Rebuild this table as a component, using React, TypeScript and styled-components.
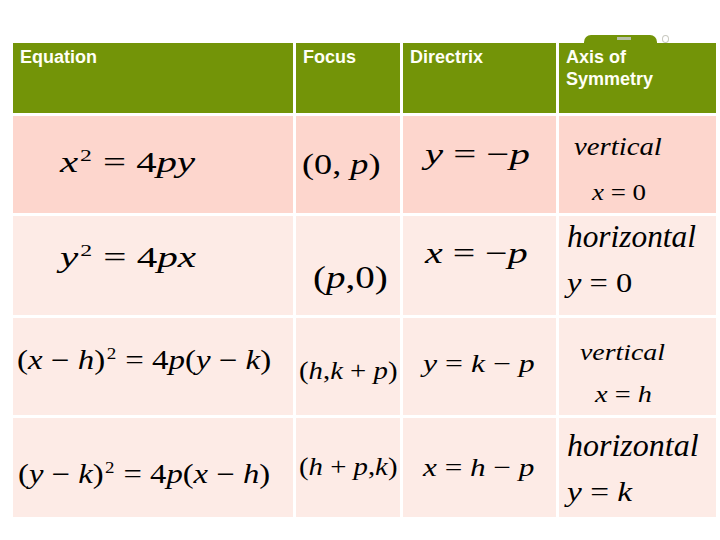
import React from 'react'
import styled, { createGlobalStyle } from 'styled-components'

const GlobalStyle = createGlobalStyle`
  html, body {
    margin: 0;
    padding: 0;
    background: #ffffff;
  }
  body {
    font-family: 'Liberation Sans', Arial, sans-serif;
  }
`

type LineSpec = {
  content: React.ReactNode
  size: number
  sx?: number
  mt: number
  pl: number
}

type Tone = 'deep' | 'light'

type RowSpec = {
  tone: Tone
  cells: LineSpec[][]
}

const V = styled.i`
  font-style: italic;
`

const Sup = styled.span`
  position: relative;
  top: -0.66em;
  font-size: 0.58em;
  line-height: 0;
  margin-left: 0.08em;
  margin-right: 0.04em;
`

const rows: RowSpec[] = [
  {
    tone: 'deep',
    cells: [
      [
        {
          content: (
            <>
              <V>x</V>
              <Sup>2</Sup> = 4<V>py</V>
            </>
          ),
          size: 30,
          sx: 1.36,
          mt: 31,
          pl: 47,
        },
      ],
      [
        {
          content: (
            <>
              (0, <V>p</V>)
            </>
          ),
          size: 29,
          sx: 1.25,
          mt: 34,
          pl: 6,
        },
      ],
      [
        {
          content: (
            <>
              <V>y</V> = −<V>p</V>
            </>
          ),
          size: 30,
          sx: 1.36,
          mt: 23,
          pl: 22,
        },
      ],
      [
        { content: <V>vertical</V>, size: 25, sx: 1.15, mt: 18, pl: 15 },
        {
          content: (
            <>
              <V>x</V> = 0
            </>
          ),
          size: 24,
          sx: 1.12,
          mt: 21,
          pl: 33,
        },
      ],
    ],
  },
  {
    tone: 'light',
    cells: [
      [
        {
          content: (
            <>
              <V>y</V>
              <Sup>2</Sup> = 4<V>px</V>
            </>
          ),
          size: 30,
          sx: 1.37,
          mt: 26,
          pl: 47,
        },
      ],
      [
        {
          content: (
            <>
              (<V>p</V>,0)
            </>
          ),
          size: 32,
          sx: 1.22,
          mt: 45,
          pl: 17,
        },
      ],
      [
        {
          content: (
            <>
              <V>x</V> = −<V>p</V>
            </>
          ),
          size: 30,
          sx: 1.33,
          mt: 22,
          pl: 22,
        },
      ],
      [
        { content: <V>horizontal</V>, size: 32, sx: 0.98, mt: 4, pl: 8 },
        {
          content: (
            <>
              <V>y</V> = 0
            </>
          ),
          size: 28,
          sx: 1.16,
          mt: 17,
          pl: 8,
        },
      ],
    ],
  },
  {
    tone: 'light',
    cells: [
      [
        {
          content: (
            <>
              (<V>x</V> − <V>h</V>)<Sup>2</Sup> = 4<V>p</V>(<V>y</V> − <V>k</V>)
            </>
          ),
          size: 27,
          sx: 1.22,
          mt: 29,
          pl: 4,
        },
      ],
      [
        {
          content: (
            <>
              (<V>h</V>,<V>k</V> + <V>p</V>)
            </>
          ),
          size: 25,
          sx: 1.15,
          mt: 40,
          pl: 3,
        },
      ],
      [
        {
          content: (
            <>
              <V>y</V> = <V>k</V> − <V>p</V>
            </>
          ),
          size: 25,
          sx: 1.27,
          mt: 33,
          pl: 20,
        },
      ],
      [
        { content: <V>vertical</V>, size: 24, sx: 1.16, mt: 22, pl: 21 },
        {
          content: (
            <>
              <V>x</V> = <V>h</V>
            </>
          ),
          size: 24,
          sx: 1.18,
          mt: 18,
          pl: 36,
        },
      ],
    ],
  },
  {
    tone: 'light',
    cells: [
      [
        {
          content: (
            <>
              (<V>y</V> − <V>k</V>)<Sup>2</Sup> = 4<V>p</V>(<V>x</V> − <V>h</V>)
            </>
          ),
          size: 27,
          sx: 1.21,
          mt: 43,
          pl: 5,
        },
      ],
      [
        {
          content: (
            <>
              (<V>h</V> + <V>p</V>,<V>k</V>)
            </>
          ),
          size: 25,
          sx: 1.15,
          mt: 36,
          pl: 3,
        },
      ],
      [
        {
          content: (
            <>
              <V>x</V> = <V>h</V> − <V>p</V>
            </>
          ),
          size: 26,
          sx: 1.2,
          mt: 37,
          pl: 20,
        },
      ],
      [
        { content: <V>horizontal</V>, size: 32, sx: 1, mt: 11, pl: 8 },
        {
          content: (
            <>
              <V>y</V> = <V>k</V>
            </>
          ),
          size: 28,
          sx: 1.19,
          mt: 17,
          pl: 8,
        },
      ],
    ],
  },
]

const headers = ['Equation', 'Focus', 'Directrix', 'Axis of Symmetry']

const App: React.FC = () => {
  return (
    <>
      <GlobalStyle />
      <Page>
        <Tab>
          <TabMark />
        </Tab>
        <Ring />
        <Table>
          {headers.map((label) => (
            <HeadCell key={label}>{label}</HeadCell>
          ))}
          {rows.map((row, r) =>
            row.cells.map((lines, c) => (
              <Cell key={`${r}-${c}`} $tone={row.tone}>
                {lines.map((line, i) => (
                  <MathLine
                    key={i}
                    $size={line.size}
                    $sx={line.sx ?? 1}
                    $mt={line.mt}
                    $pl={line.pl}
                  >
                    {line.content}
                  </MathLine>
                ))}
              </Cell>
            ))
          )}
        </Table>
      </Page>
    </>
  )
}

export default App

const Page = styled.div`
  position: relative;
  width: 720px;
  height: 540px;
  box-sizing: border-box;
  padding: 43px 0 0 13px;
  overflow: hidden;
`

const Tab = styled.div`
  position: absolute;
  left: 584px;
  top: 35px;
  width: 73px;
  height: 16px;
  border-radius: 7px 7px 0 0;
  background: #739408;
  z-index: 0;
`

const TabMark = styled.div`
  position: absolute;
  left: 33px;
  top: 2px;
  width: 14px;
  height: 3px;
  background: #b7bfa6;
`

const Ring = styled.div`
  position: absolute;
  left: 662px;
  top: 35px;
  width: 5px;
  height: 6px;
  border: 1.5px solid #c9c9c0;
  border-radius: 50%;
`

const Table = styled.div`
  position: relative;
  z-index: 1;
  display: grid;
  grid-template-columns: 280px 104px 153px 157px;
  grid-template-rows: 70px 97px 99px 97px 99px;
  gap: 3px;
`

const HeadCell = styled.div`
  background: #739408;
  color: #fffff6;
  font-family: 'Liberation Sans', Arial, sans-serif;
  font-weight: bold;
  font-size: 18px;
  line-height: 22px;
  padding: 3px 40px 0 7px;
`

const Cell = styled.div<{ $tone: Tone }>`
  background: ${({ $tone }) => ($tone === 'deep' ? '#fdd6cd' : '#fdebe6')};
  display: flex;
  flex-direction: column;
  overflow: visible;
`

const MathLine = styled.div<{ $size: number; $sx: number; $mt: number; $pl: number }>`
  font-family: 'Liberation Serif', 'Times New Roman', serif;
  color: #000000;
  font-size: ${({ $size }) => $size}px;
  line-height: 1;
  white-space: nowrap;
  margin-top: ${({ $mt }) => $mt}px;
  margin-left: ${({ $pl }) => $pl}px;
  transform: scaleX(${({ $sx }) => $sx});
  transform-origin: left center;
`
